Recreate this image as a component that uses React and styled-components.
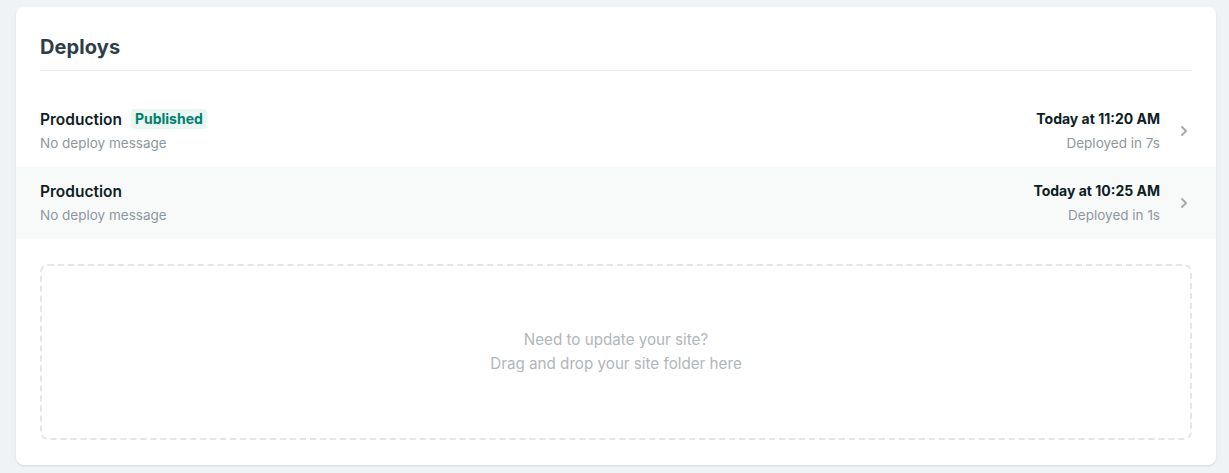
import React from "react";
import styled, { createGlobalStyle } from "styled-components";

const GlobalStyle = createGlobalStyle`
  html, body {
    margin: 0;
    background: #f0f3f6;
    font-family: Inter, "Noto Sans", "Liberation Sans", sans-serif;
    -webkit-font-smoothing: antialiased;
  }
`;

const deploys = [
  { id: 1, name: "Production", published: true, time: "Today at 11:20 AM", took: "7s" },
  { id: 2, name: "Production", published: false, time: "Today at 10:25 AM", took: "1s" },
];

export default function App() {
  return (
    <>
      <GlobalStyle />
      <Page>
        <Card>
          <Header>
            <Title>Deploys</Title>
          </Header>
          <List>
            {deploys.map((d, i) => (
              <Row key={d.id} $striped={i % 2 === 1}>
                <Left>
                  <NameLine>
                    <Name>{d.name}</Name>
                    {d.published && <Badge>Published</Badge>}
                  </NameLine>
                  <Muted>No deploy message</Muted>
                </Left>
                <Right>
                  <Time>{d.time}</Time>
                  <Muted>Deployed in {d.took}</Muted>
                </Right>
                <Chevron viewBox="0 0 8 12">
                  <path d="M2 2l4 4-4 4" fill="none" stroke="#a3abb1" strokeWidth="2" strokeLinecap="round" strokeLinejoin="round" />
                </Chevron>
              </Row>
            ))}
          </List>
          <DropZone>
            <span>Need to update your site?</span>
            <span>Drag and drop your site folder here</span>
          </DropZone>
        </Card>
      </Page>
    </>
  );
}

const Page = styled.div`
  padding: 7px 13px 10px 16px;
`;

const Card = styled.div`
  background: #fff;
  border-radius: 8px;
  box-shadow: 0 1px 2px rgba(14, 30, 37, 0.12);
  padding: 24px 0 25px;
`;

const Header = styled.div`
  margin: 0 24px;
  padding-bottom: 7px;
  border-bottom: 1px solid #e9ebed;
`;

const Title = styled.h2`
  margin: 0;
  font-size: 20px;
  line-height: 32px;
  font-weight: 700;
  color: #2e3d47;
  letter-spacing: 0.1px;
`;

const List = styled.div`
  margin-top: 24px;
`;

const Row = styled.div`
  display: flex;
  align-items: center;
  padding: 12px 28px 12px 24px;
  background: ${(p) => (p.$striped ? "#f8fafa" : "transparent")};
`;

const Left = styled.div`
  flex: 1;
  display: flex;
  flex-direction: column;
`;

const NameLine = styled.div`
  display: flex;
  align-items: center;
  gap: 9px;
  height: 24px;
`;

const Name = styled.span`
  font-size: 15.5px;
  font-weight: 600;
  color: #0e1e25;
`;

const Badge = styled.span`
  background: #eaf6f3;
  color: #00806f;
  font-size: 14px;
  font-weight: 700;
  line-height: 20px;
  padding: 0 4px;
  border-radius: 4px;
`;

const Muted = styled.span`
  font-size: 13.5px;
  line-height: 24px;
  color: #8e979d;
`;

const Right = styled.div`
  display: flex;
  flex-direction: column;
  align-items: flex-end;
`;

const Time = styled.span`
  font-size: 14px;
  line-height: 24px;
  font-weight: 700;
  color: #0e1e25;
`;

const Chevron = styled.svg`
  width: 8px;
  height: 12px;
  margin-left: 20px;
`;

const DropZone = styled.div`
  margin: 25px 24px 0;
  height: 172px;
  border: 2px dashed #e4e5e6;
  border-radius: 8px;
  display: flex;
  flex-direction: column;
  align-items: center;
  justify-content: center;
  font-size: 15.2px;
  line-height: 24px;
  color: #b1b6ba;
`;
